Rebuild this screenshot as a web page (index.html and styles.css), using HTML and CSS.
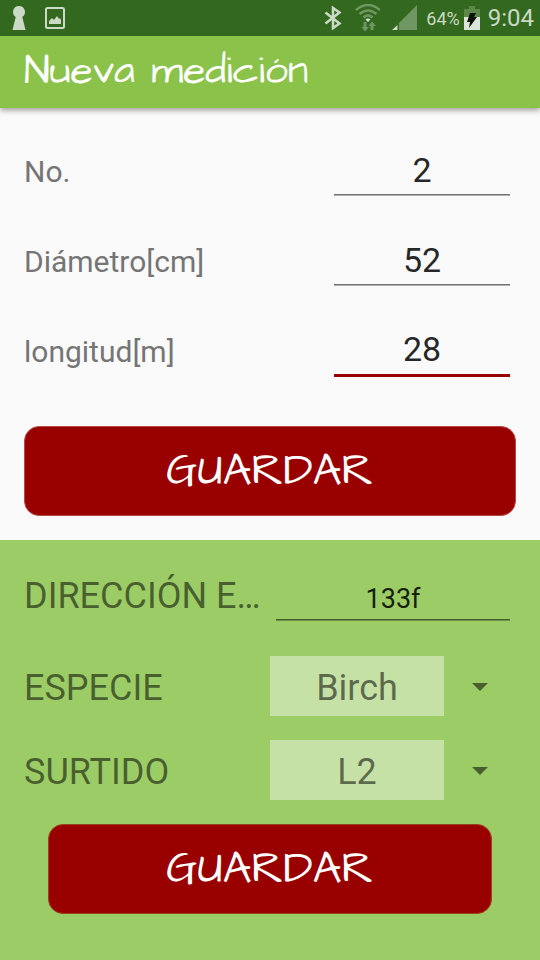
FILE: index.html
```
<!DOCTYPE html>
<html lang="es">
<head>
<meta charset="utf-8">
<meta name="viewport" content="width=device-width, initial-scale=1">
<title>Nueva medición</title>
<link rel="stylesheet" href="styles.css">
</head>
<body>
<div class="status">
  <div class="status-group status-left">
    <svg width="14" height="26" viewBox="0 0 14 26" aria-hidden="true"><path fill="#ccd9c6" d="M7 1a6 6 0 0 1 3.300 11L13.500 25H.5L3.700 12A6 6 0 0 1 7 1z"/></svg>
    <svg width="20" height="22" viewBox="0 0 20 22" aria-hidden="true"><rect x="1" y="1" width="18" height="20" rx="1.500" fill="none" stroke="#ccd9c6" stroke-width="2"/><path fill="#ccd9c6" d="M4 17v-3l3-3 2 2 3-4 2 3 1-1 1 2v4z"/></svg>
  </div>
  <div class="status-group status-right">
    <svg width="18" height="26" viewBox="0 0 18 26" aria-hidden="true"><path fill="none" stroke="#ccd9c6" stroke-width="2.500" d="M1.500 7.500l14 11L9 23V3l6.500 4.500-14 11"/></svg>
    <svg width="26" height="28" viewBox="0 0 26 28" aria-hidden="true"><g fill="none" stroke="#709663" stroke-width="2.500"><path d="M2 6Q14-4 26 6"/><path d="M5.500 10q8.500-7 17 0"/><path d="M9.500 13.500q4.500-4 9 0"/></g><path fill="#dce6d8" d="M11.500 15.500q2.500-2 5 0L14 18z"/><path fill="#709663" d="M9.500 18h3v5H15l-4 4.500L7.500 23h2zM16.500 26h3v-4H22l-4-4.500-3.500 4.500h2z"/></svg>
    <svg class="signal" width="26" height="26" viewBox="0 0 26 26" aria-hidden="true"><path fill="#709663" d="M25 0v25H7V18z"/><path fill="#ccd9c6" d="M5.500 20v5H0z"/></svg>
    <span class="percent">64%</span>
    <svg width="16" height="24" viewBox="0 0 16 24" aria-hidden="true"><path fill="#5c8749" d="M5 0h6v3h5v8H0V3h5z"/><path fill="#dce6d8" d="M0 11h16v13H0z"/><path fill="#0b1208" d="M6 7h6l-2 4h3L5 22l1-6H3z"/></svg>
    <span class="clock">9:04</span>
  </div>
</div>
<header class="bar"><h1 class="bar-title">Nueva medición</h1></header>
<main class="content">
  <form class="measure">
    <div class="row">
      <label class="row-label" for="num">No.</label>
      <input class="line-input" id="num" type="text" inputmode="numeric" value="2">
    </div>
    <div class="row">
      <label class="row-label" for="diam">Diámetro[cm]</label>
      <input class="line-input" id="diam" type="text" inputmode="numeric" value="52">
    </div>
    <div class="row">
      <label class="row-label" for="len">longitud[m]</label>
      <input class="line-input line-input-active" id="len" type="text" inputmode="numeric" value="28">
    </div>
    <button class="save" type="button">GUARDAR</button>
  </form>
  <form class="stack">
    <div class="stack-row address">
      <label class="stack-label" for="addr">DIRECCIÓN E…</label>
      <input class="line-input line-input-small" id="addr" type="text" value="133f">
    </div>
    <div class="stack-row">
      <label class="stack-label" for="species">ESPECIE</label>
      <div class="picker">
        <select class="picker-select" id="species"><option>Birch</option></select>
      </div>
    </div>
    <div class="stack-row">
      <label class="stack-label" for="sort">SURTIDO</label>
      <div class="picker">
        <select class="picker-select" id="sort"><option>L2</option></select>
      </div>
    </div>
    <button class="save save-inset" type="button">GUARDAR</button>
  </form>
</main>
</body>
</html>
```
FILE: styles.css
```
* { box-sizing: border-box; }

body {
  margin: 0;
  min-height: 100vh;
  display: flex;
  flex-direction: column;
  background: #fafafa;
  font-family: Roboto, "Liberation Sans", sans-serif;
}

.status {
  display: flex;
  justify-content: space-between;
  align-items: center;
  height: 36px;
  padding: 0 6px 0 12px;
  background: #33691e;
  color: #ccd9c6;
}

.status-group { display: flex; align-items: center; }
.status-left { gap: 19px; }
.status-right { gap: 8px; }
.status-right svg { margin-left: 4px; }
.status-right .percent + svg { margin-left: -4px; }
.percent { font-size: 18px; }
.clock { font-size: 24px; }

.bar {
  position: relative;
  display: flex;
  align-items: center;
  height: 72px;
  padding: 0 24px;
  background: #8bc34a;
  box-shadow: 0 2px 6px rgba(0, 0, 0, 0.4);
  clip-path: inset(0 0 -12px);
}

.bar-title {
  margin: 0;
  color: #fff;
  font: 400 41px/64px "Architects Daughter", Lato, sans-serif;
}

.content { flex: 1; display: flex; flex-direction: column; }

.measure {
  display: flex;
  flex-direction: column;
  padding: 18px 24px 24px;
}

.row {
  display: flex;
  align-items: center;
  justify-content: space-between;
  height: 90px;
  padding-right: 6px;
}

.row-label { color: #757575; font-size: 30px; }

.line-input {
  width: 176px;
  min-width: 0;
  height: 48px;
  padding: 0 0 2px;
  border: 0;
  border-bottom: 1px solid rgba(0, 0, 0, 0.54);
  box-shadow: 0 1px rgba(0, 0, 0, 0.3);
  background: none;
  color: rgba(0, 0, 0, 0.87);
  font: 34px/44px Roboto, sans-serif;
  text-align: center;
  outline: 0;
}

.line-input-active {
  height: 51px;
  border-bottom: 3px solid #990000;
  box-shadow: none;
}

.save {
  height: 90px;
  margin-top: 30px;
  padding: 0;
  border: 1px solid #b84a44;
  border-radius: 15px;
  background: #990000;
  color: #fff;
  font: 45px/60px "Architects Daughter", Lato, sans-serif;
}

.save-inset { margin: 12px 24px 0; border-color: #994419; }

.stack {
  flex: 1;
  display: flex;
  flex-direction: column;
  gap: 12px;
  padding: 20px 24px 40px;
  background: #9ccc65;
}

.stack-row {
  display: grid;
  grid-template-columns: minmax(0, 1fr) minmax(0, 1fr);
  align-items: center;
  height: 72px;
}

.stack-row:nth-child(n + 2) { padding-top: 12px; }
.stack-row:nth-child(n + 2) .stack-label { padding-top: 4px; }

.stack-label {
  overflow: hidden;
  color: rgba(0, 0, 0, 0.54);
  font-size: 36px;
  line-height: 48px;
  white-space: nowrap;
  text-overflow: ellipsis;
}

.line-input-small {
  width: auto;
  margin: 0 6px;
  padding: 6px 0 0;
  font-size: 27px;
}

.picker { position: relative; height: 60px; }

.picker-select {
  appearance: none;
  width: 100%;
  height: 100%;
  padding: 4px 72px 0 0;
  border: 0;
  border-radius: 0;
  background: linear-gradient(#c5e1a5, #c5e1a5) left / calc(100% - 72px) 100% no-repeat;
  color: rgba(0, 0, 0, 0.54);
  font: 36px/56px Roboto, sans-serif;
  text-align: center;
  text-align-last: center;
}

.picker::after {
  content: "";
  position: absolute;
  top: 27px;
  right: 28px;
  border: 8px solid transparent;
  border-top-color: #47602e;
  border-bottom: 0;
  pointer-events: none;
}
```
